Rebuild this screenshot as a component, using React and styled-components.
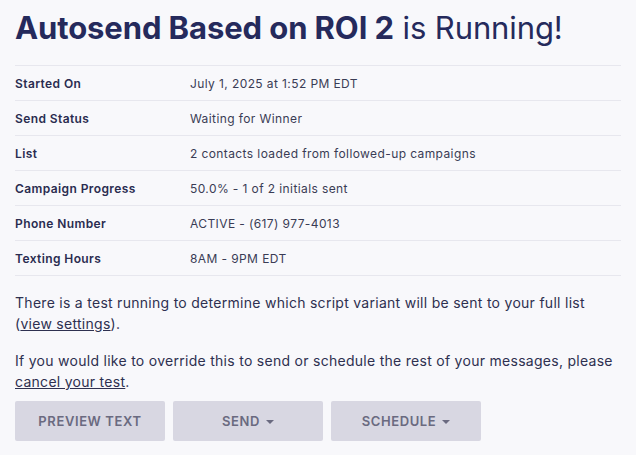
import React from "react";
import styled, { createGlobalStyle } from "styled-components";

const Global = createGlobalStyle`
  html, body { margin: 0; padding: 0; background: #f8f8fb; }
  body { font-family: Inter, "Noto Sans", sans-serif; color: #2b2d4d; }
`;

const Page = styled.div`
  padding: 8px 15px 15px 15px;
  width: 636px;
  box-sizing: border-box;
`;

const Title = styled.h1`
  margin: 0 0 17px 0;
  font-size: 31px;
  line-height: 40px;
  font-weight: 400;
  letter-spacing: -0.1px;
  color: #252a5c;
  white-space: nowrap;
`;

const Strong = styled.span`
  font-weight: 700;
`;

const Table = styled.div`
  display: grid;
  grid-template-columns: 175px 1fr;
  border-top: 1px solid #e7e7ee;
`;

const Cell = styled.div`
  height: 34px;
  display: flex;
  align-items: center;
  font-size: 12px;
  letter-spacing: 0.4px;
  border-bottom: 1px solid #e7e7ee;
  font-weight: ${(p) => (p.$label ? 600 : 400)};
  color: ${(p) => (p.$label ? "#2a2c50" : "#3a3c55")};
`;

const Para = styled.p`
  margin: 16px 0 0 0;
  font-size: 14px;
  line-height: 21px;
  letter-spacing: 0.28px;
  color: #2e3050;
  &:first-of-type { margin-top: 16px; }
`;

const Link = styled.a`
  color: inherit;
  text-decoration: underline;
  cursor: pointer;
`;

const Buttons = styled.div`
  display: flex;
  gap: 8px;
  margin-top: 9px;
`;

const Button = styled.button`
  width: 150px;
  height: 40px;
  border: none;
  border-radius: 2px;
  background: #d8d7e2;
  color: #6a6a80;
  font-family: inherit;
  font-size: 13px;
  font-weight: 600;
  letter-spacing: 0.6px;
  text-transform: uppercase;
  display: flex;
  align-items: center;
  justify-content: center;
  gap: 6px;
`;

const Caret = styled.span`
  width: 0;
  height: 0;
  border-left: 4px solid transparent;
  border-right: 4px solid transparent;
  border-top: 4px solid #6a6a80;
  margin-top: 1px;
`;

const rows = [
  ["Started On", "July 1, 2025 at 1:52 PM EDT"],
  ["Send Status", "Waiting for Winner"],
  ["List", "2 contacts loaded from followed-up campaigns"],
  ["Campaign Progress", "50.0% - 1 of 2 initials sent"],
  ["Phone Number", "ACTIVE - (617) 977-4013"],
  ["Texting Hours", "8AM - 9PM EDT"],
];

export default function App() {
  return (
    <>
      <Global />
      <Page>
        <Title>
          <Strong>Autosend Based on ROI 2</Strong> is Running!
        </Title>
        <Table>
          {rows.map(([k, v]) => (
            <React.Fragment key={k}>
              <Cell $label>{k}</Cell>
              <Cell>{v}</Cell>
            </React.Fragment>
          ))}
        </Table>
        <Para>
          There is a test running to determine which script variant will be sent to your full list (
          <Link>view settings</Link>).
        </Para>
        <Para>
          If you would like to override this to send or schedule the rest of your messages, please{" "}
          <Link>cancel your test</Link>.
        </Para>
        <Buttons>
          <Button>Preview Text</Button>
          <Button>
            Send <Caret />
          </Button>
          <Button>
            Schedule <Caret />
          </Button>
        </Buttons>
      </Page>
    </>
  );
}
